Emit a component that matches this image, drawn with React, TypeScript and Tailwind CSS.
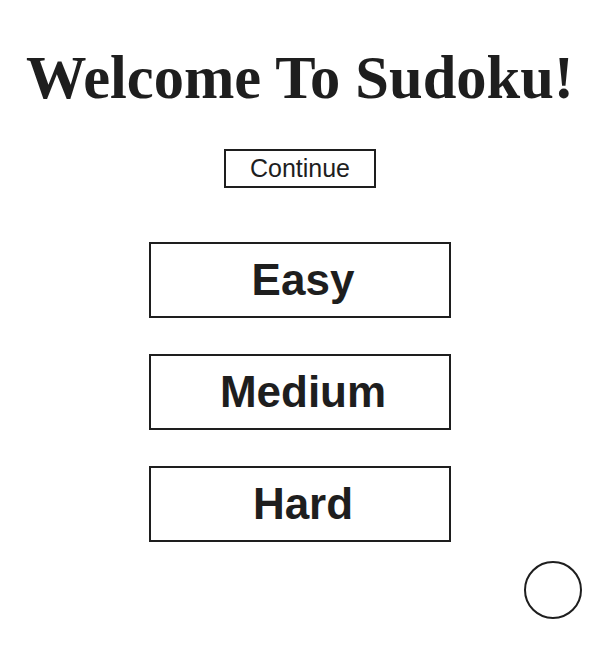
import React from "react";

export default function App() {
  const levels = ["Easy", "Medium", "Hard"];
  return (
    <div className="w-[600px] h-[645px] bg-white flex flex-col items-center text-[#1e1e1e] overflow-hidden">
      <h1
        className="mt-[48px] text-[60.5px] leading-none font-bold whitespace-nowrap"
        style={{ fontFamily: '"Liberation Serif", "Times New Roman", serif' }}
      >
        Welcome To Sudoku!
      </h1>
      <button
        className="mt-[40px] w-[152px] h-[39px] border-2 border-[#1e1e1e] flex items-center justify-center text-[25px] leading-none bg-white"
        style={{ fontFamily: '"Liberation Sans", Arial, sans-serif' }}
      >
        Continue
      </button>
      <div className="mt-[54px] flex flex-col gap-[36px]">
        {levels.map((l) => (
          <button
            key={l}
            className="w-[302px] h-[76px] border-2 border-[#1e1e1e] flex items-center justify-center text-[44px] font-bold leading-none bg-white pl-[6px]"
            style={{ fontFamily: '"Liberation Sans", Arial, sans-serif' }}
          >
            {l}
          </button>
        ))}
      </div>
      <div className="mt-[19px] self-end mr-[18px] w-[58px] h-[58px] rounded-full border-2 border-[#1e1e1e]" />
    </div>
  );
}
